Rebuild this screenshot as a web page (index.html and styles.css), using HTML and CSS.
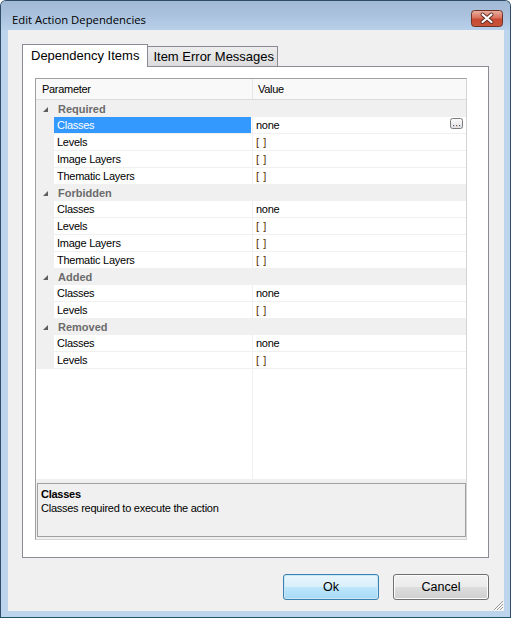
FILE: index.html
```html
<!DOCTYPE html>
<html>
<head>
<meta charset="utf-8">
<link rel="stylesheet" href="styles.css">
</head>
<body>
<div class="window">
  <div class="titlebar">
    <span class="title">Edit Action Dependencies</span>
    <div class="close">
      <svg width="32" height="17" viewBox="0 0 32 17">
        <defs>
          <linearGradient id="cg" x1="0" y1="0" x2="0" y2="1">
            <stop offset="0" stop-color="#eab2a4"/>
            <stop offset="0.45" stop-color="#d9725d"/>
            <stop offset="0.55" stop-color="#c94a33"/>
            <stop offset="1" stop-color="#c8553c"/>
          </linearGradient>
        </defs>
        <rect x="0.5" y="0.5" width="31" height="16" rx="3" fill="url(#cg)" stroke="#6f3326"/>
        <path d="M11.5 4.5 L20.5 12 M20.5 4.5 L11.5 12" stroke="#5a2a22" stroke-width="4" stroke-linecap="round"/>
        <path d="M11.5 4.5 L20.5 12 M20.5 4.5 L11.5 12" stroke="#ffffff" stroke-width="2.2" stroke-linecap="round"/>
      </svg>
    </div>
  </div>
  <div class="client">
    <div class="tabs">
      <div class="tab active">Dependency Items</div>
      <div class="tab inactive">Item Error Messages</div>
    </div>
    <div class="panel">
      <div class="pgrid">
        <div class="view">
          <div class="header">
            <div class="hname">Parameter</div>
            <div class="hval">Value</div>
          </div>

          <div class="cat first"><span class="tri"><svg width="5" height="5" viewBox="0 0 5 5"><polygon points="5,0 5,5 0,5" fill="#5e5e5e"/></svg></span><span class="catname">Required</span></div>
          <div class="row"><div class="lead"></div><div class="name sel">Classes</div><div class="val"><span>none</span><span class="ell"><svg width="13" height="11" viewBox="0 0 13 11"><defs><linearGradient id="eg" x1="0" y1="0" x2="0" y2="1"><stop offset="0" stop-color="#fbfbfb"/><stop offset="1" stop-color="#e2e2e2"/></linearGradient></defs><rect x="0.5" y="0.5" width="12" height="10" rx="2" fill="url(#eg)" stroke="#7a7a7a"/><rect x="3" y="7" width="1.2" height="1.2" fill="#4a5a8a"/><rect x="6" y="7" width="1.2" height="1.2" fill="#8a5a2a"/><rect x="9" y="7" width="1.2" height="1.2" fill="#4a5a8a"/></svg></span></div></div>
          <div class="row"><div class="lead"></div><div class="name">Levels</div><div class="val br">[ ]</div></div>
          <div class="row"><div class="lead"></div><div class="name">Image Layers</div><div class="val br">[ ]</div></div>
          <div class="row"><div class="lead"></div><div class="name">Thematic Layers</div><div class="val br">[ ]</div></div>

          <div class="cat"><span class="tri"><svg width="5" height="5" viewBox="0 0 5 5"><polygon points="5,0 5,5 0,5" fill="#5e5e5e"/></svg></span><span class="catname">Forbidden</span></div>
          <div class="row"><div class="lead"></div><div class="name">Classes</div><div class="val">none</div></div>
          <div class="row"><div class="lead"></div><div class="name">Levels</div><div class="val br">[ ]</div></div>
          <div class="row"><div class="lead"></div><div class="name">Image Layers</div><div class="val br">[ ]</div></div>
          <div class="row"><div class="lead"></div><div class="name">Thematic Layers</div><div class="val br">[ ]</div></div>

          <div class="cat"><span class="tri"><svg width="5" height="5" viewBox="0 0 5 5"><polygon points="5,0 5,5 0,5" fill="#5e5e5e"/></svg></span><span class="catname">Added</span></div>
          <div class="row"><div class="lead"></div><div class="name">Classes</div><div class="val">none</div></div>
          <div class="row"><div class="lead"></div><div class="name">Levels</div><div class="val br">[ ]</div></div>

          <div class="cat"><span class="tri"><svg width="5" height="5" viewBox="0 0 5 5"><polygon points="5,0 5,5 0,5" fill="#5e5e5e"/></svg></span><span class="catname">Removed</span></div>
          <div class="row"><div class="lead"></div><div class="name">Classes</div><div class="val">none</div></div>
          <div class="row"><div class="lead"></div><div class="name">Levels</div><div class="val br">[ ]</div></div>

          <div class="filler"><div class="fleft"></div></div>
        </div>
        <div class="desc">
          <div class="dtitle">Classes</div>
          <div class="dtext">Classes required to execute the action</div>
        </div>
      </div>
    </div>
    <div class="footer">
      <div class="buttons">
        <div class="btn ok">Ok</div>
        <div class="btn cancel">Cancel</div>
      </div>
      <div class="grip">
        <svg width="13" height="13" viewBox="0 0 13 13">
          <path d="M12 3 L3 12 M12 6 L6 12 M12 9 L9 12" stroke="#9a9a9a" stroke-width="1"/>
          <path d="M12.8 3.8 L3.8 12.8 M12.8 6.8 L6.8 12.8 M12.8 9.8 L9.8 12.8" stroke="#ffffff" stroke-width="0.8"/>
        </svg>
      </div>
    </div>
  </div>
</div>
</body>
</html>
```

FILE: styles.css
```css
html, body {
  margin: 0;
  padding: 0;
  background: #ffffff;
}

.window {
  width: 511px;
  height: 618px;
  box-sizing: border-box;
  border: 1px solid #2f4c68;
  border-bottom-color: #1d5566;
  border-radius: 6px 6px 0 0;
  background: #bcd4ec;
  padding: 0 6px 6px 7px;
  display: flex;
  flex-direction: column;
  overflow: hidden;
}

.titlebar {
  height: 29px;
  flex: none;
  margin: 0 -6px 0 -7px;
  padding: 0 7px 0 11px;
  background: linear-gradient(#a1b9d4 0%, #aac2dd 50%, #b8d0ea 100%);
  display: flex;
  align-items: flex-start;
  justify-content: space-between;
}

.title {
  font-family: "Open Sans", "Noto Sans", sans-serif;
  font-size: 11.3px;
  color: #000000;
  line-height: 16px;
  margin-top: 11px;
}

.close {
  margin-top: 9px;
  width: 32px;
  height: 17px;
  display: flex;
}

.client {
  flex: 1;
  background: #f0f0f0;
  padding: 14px 15px 0 14px;
  display: flex;
  flex-direction: column;
}

.tabs {
  height: 22px;
  flex: none;
  display: flex;
  align-items: flex-end;
}

.tab {
  font-family: "Liberation Sans", Arial, sans-serif;
  font-size: 13px;
  color: #000000;
  box-sizing: border-box;
  border: 1px solid #898c95;
  border-bottom: none;
}

.tab.active {
  height: 23px;
  margin-bottom: -1px;
  background: #ffffff;
  padding: 3px 8px 0 8px;
  line-height: 16px;
  position: relative;
  z-index: 1;
}

.tab.inactive {
  height: 20px;
  border-left: none;
  background: linear-gradient(#ededed, #dcdcdc);
  padding: 2px 3px 0 5px;
  line-height: 16px;
}

.panel {
  flex: none;
  height: 492px;
  box-sizing: border-box;
  border: 1px solid #898c95;
  background: #ffffff;
  padding: 11px 0 0 12px;
}

.pgrid {
  width: 432px;
  height: 462px;
  box-sizing: border-box;
  border: 1px solid #a0a0a0;
  border-bottom-color: #d4d4d4;
  border-right-color: #d4d4d4;
  background: #f0f0f0;
  display: flex;
  flex-direction: column;
  font-family: "Liberation Sans", Arial, sans-serif;
  font-size: 11px;
}

.view {
  height: 400px;
  flex: none;
  background: #ffffff;
  display: flex;
  flex-direction: column;
}

.header {
  height: 21px;
  box-sizing: border-box;
  background: #f9f9f9;
  border-bottom: 1px solid #dcdcdc;
  display: flex;
  flex: none;
  color: #000;
  letter-spacing: -0.3px;
}

.hname {
  width: 216px;
  box-sizing: border-box;
  padding: 4px 0 0 6px;
}

.hval {
  flex: 1;
  border-left: 1px solid #e6e6e6;
  padding: 4px 0 0 5px;
}

.cat {
  height: 16px;
  flex: none;
  background: #f0f0f0;
  display: flex;
  align-items: center;
}

.cat.first {
  height: 17px;
  padding-top: 1px;
  box-sizing: border-box;
}

.tri {
  width: 7px;
  margin-left: 7px;
  display: flex;
  align-items: center;
}

.catname {
  margin-left: 8px;
  font-weight: bold;
  color: #6b6b6b;
  line-height: 16px;
}

.row {
  height: 17px;
  flex: none;
  display: flex;
  box-sizing: border-box;
  border-bottom: 1px solid #f0f0f0;
  background: #ffffff;
  line-height: 16px;
  letter-spacing: -0.25px;
}

.lead {
  width: 18px;
  flex: none;
  background: #f0f0f0;
  margin-bottom: -1px;
}

.name {
  width: 197px;
  flex: none;
  box-sizing: border-box;
  padding-left: 3px;
  color: #000000;
}

.name.sel {
  background: #3399ff;
  color: #ffffff;
}

.val {
  flex: 1;
  margin-left: 1px;
  border-left: 1px solid #f0f0f0;
  padding-left: 3px;
  display: flex;
  justify-content: space-between;
  color: #000000;
}

.val.br {
  color: #5b3300;
  letter-spacing: 0.6px;
}

.ell {
  display: flex;
  margin: 1px 3px 0 0;
}

.filler {
  flex: 1;
  display: flex;
}

.fleft {
  width: 217px;
  box-sizing: border-box;
  border-right: 1px solid #f0f0f0;
}

.desc {
  margin: 4px 0 0 1px;
  height: 54px;
  box-sizing: border-box;
  border: 1px solid #a0a0a0;
  background: #f0f0f0;
  padding: 3px 3px 0 3px;
  line-height: 14px;
  color: #000000;
  letter-spacing: -0.25px;
}

.dtitle {
  font-weight: bold;
}

.footer {
  flex: 1;
  display: flex;
  margin-right: -15px;
}

.buttons {
  flex: 1;
  display: flex;
  justify-content: flex-end;
  gap: 14px;
  padding-top: 16px;
  align-items: flex-start;
}

.btn {
  width: 96px;
  height: 26px;
  box-sizing: border-box;
  border-radius: 3px;
  font-family: "Liberation Sans", Arial, sans-serif;
  font-size: 12.5px;
  color: #000000;
  display: flex;
  align-items: center;
  justify-content: center;
}

.btn.ok {
  border: 1px solid #3c7fb1;
  background: linear-gradient(#e8f5fc 0%, #d9effa 50%, #bee6fd 51%, #a7d9f5 100%);
  box-shadow: inset 0 0 0 1px #c8e8f8;
}

.btn.cancel {
  border: 1px solid #707070;
  background: linear-gradient(#f2f2f2 0%, #ebebeb 50%, #dddddd 51%, #cfcfcf 100%);
  box-shadow: inset 0 0 0 1px #fcfcfc;
}

.grip {
  width: 15px;
  display: flex;
  align-items: flex-end;
  justify-content: flex-end;
}
```
